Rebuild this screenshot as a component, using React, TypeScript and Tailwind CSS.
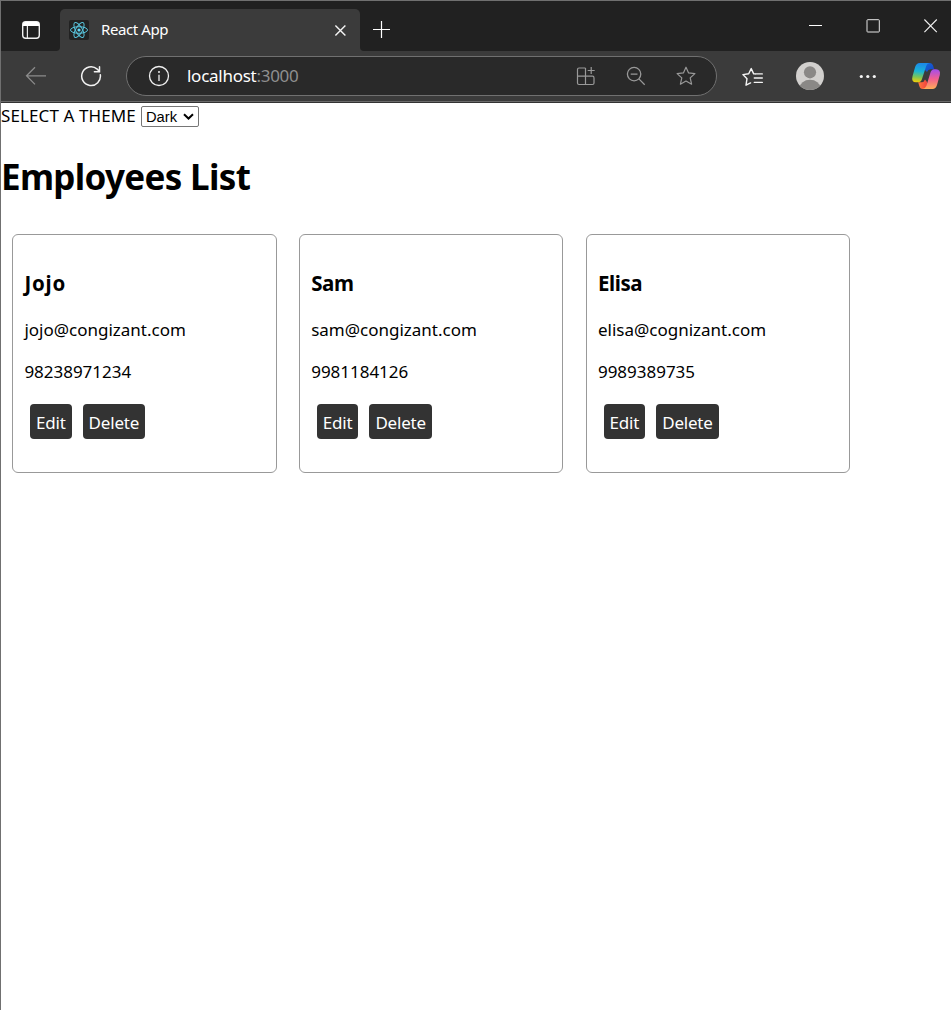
import React from 'react';

type Employee = { name: string; email: string; phone: string; nameClass: string };

const employees: Employee[] = [
  { name: 'Jojo', email: 'jojo@congizant.com', phone: '98238971234', nameClass: 'tracking-[0.8px]' },
  { name: 'Sam', email: 'sam@congizant.com', phone: '9981184126', nameClass: 'tracking-[-0.4px]' },
  { name: 'Elisa', email: 'elisa@cognizant.com', phone: '9989389735', nameClass: 'tracking-[-0.4px]' },
];

const STAR = 'M10 1.2 L12.6 6.9 L18.9 7.6 L14.2 11.9 L15.6 18.2 L10 15.1 L4.4 18.2 L5.8 11.9 L1.1 7.6 L7.4 6.9 Z';

function TabStrip() {
  return (
    <div className="flex h-[50px] items-start bg-[#212121]">
      <svg className="ml-[20px] mt-[19px] h-5 w-5 shrink-0" viewBox="0 0 20 20" fill="none">
        <rect x="1.7" y="1.7" width="16.6" height="16.6" rx="3" stroke="#f2f2f2" strokeWidth="1.4" />
        <path d="M2 3.6 Q2 2 4 2 H16 Q18 2 18 3.6 V6 H2 Z" fill="#fff" />
        <path d="M6.4 6 V18" stroke="#e8e8e8" strokeWidth="1.2" />
      </svg>
      <div className="ml-[15px] flex self-stretch">
        <svg className="mt-[46px] h-1 w-1" viewBox="0 0 4 4"><path d="M4 0 V4 H0 Q4 4 4 0" fill="#3b3b3b" /></svg>
        <div className="mt-[8px] flex h-[42px] w-[300px] items-center rounded-t-[5px] bg-[#3b3b3b]">
          <svg className="ml-[9px] h-5 w-5" viewBox="0 0 20 20" fill="none">
            <rect width="20" height="20" rx="2" fill="#222" />
            <g stroke="#58c4dc" strokeWidth="1">
              <ellipse cx="10" cy="10" rx="8.5" ry="3.3" />
              <ellipse cx="10" cy="10" rx="8.5" ry="3.3" transform="rotate(60 10 10)" />
              <ellipse cx="10" cy="10" rx="8.5" ry="3.3" transform="rotate(120 10 10)" />
            </g>
            <circle cx="10" cy="10" r="1.6" fill="#61dafb" />
          </svg>
          <span className="mb-[2px] ml-[12px] w-[233px] whitespace-nowrap text-[15px] leading-5 tracking-[-0.4px] text-white">React App</span>
          <svg className="h-3 w-3" viewBox="0 0 12 12" fill="none" stroke="#f5f5f5" strokeWidth="1.4"><path d="M1.4 1.5 L11.4 11.5 M11.4 1.5 L1.4 11.5" /></svg>
        </div>
        <svg className="mt-[46px] h-1 w-1" viewBox="0 0 4 4"><path d="M0 0 V4 H4 Q0 4 0 0" fill="#3b3b3b" /></svg>
      </div>
      <svg className="ml-[8px] mt-[19px] h-[19px] w-[19px]" viewBox="0 0 19 19" fill="none" stroke="#fff" strokeWidth="1.2"><path d="M1 9.5 H18 M9.5 1 V18" /></svg>
      <div className="ml-auto mr-[13px] mt-[18px] flex">
        <svg className="h-[14px] w-[14px]" viewBox="0 0 14 14"><path d="M0 6.5 H13" stroke="#fff" /></svg>
        <svg className="ml-[43px] h-[14px] w-[14px]" viewBox="0 0 14 14" fill="none"><rect x="1" y=".7" width="12.3" height="12.3" rx=".7" stroke="#e6e6e6" /></svg>
        <svg className="ml-[44px] h-[14px] w-[14px]" viewBox="0 0 14 14"><path d="M.4 .5 L12.8 13.2 M12.8 .5 L.4 13.2" stroke="#f0f0f0" strokeWidth="1.1" /></svg>
      </div>
    </div>
  );
}

function Copilot() {
  return (
    <svg className="ml-[33px] h-[28px] w-[30px]" viewBox="0 0 30 28">
      <defs>
        <linearGradient id="cpA" x1="0.1" y1="0" x2="0" y2="1">
          <stop offset="0" stopColor="#1c8be8" /><stop offset=".4" stopColor="#19b4d6" /><stop offset=".7" stopColor="#7bc558" /><stop offset="1" stopColor="#ffd000" />
        </linearGradient>
        <linearGradient id="cpB" x1="0" y1="0" x2="0" y2="1">
          <stop offset="0" stopColor="#a24dee" /><stop offset=".5" stopColor="#f3608f" /><stop offset="1" stopColor="#ffae57" />
        </linearGradient>
        <linearGradient id="cpC" x1="0" y1="0" x2="1" y2="1">
          <stop offset="0" stopColor="#1468d8" /><stop offset="1" stopColor="#1641c4" />
        </linearGradient>
        <linearGradient id="cpD" x1="0" y1="0" x2="1" y2="0">
          <stop offset="0" stopColor="#ff7a3c" /><stop offset="1" stopColor="#f0443f" />
        </linearGradient>
      </defs>
      <path d="M14 1 H18.7 Q21.2 1 22.2 4 L23.2 7.2 H19.5 Q17 7.2 16 10 L14 8 Z" fill="url(#cpC)" />
      <path d="M16 27 H11.5 Q9.2 27 8.2 23.7 L7.2 20.3 H10.5 Q13 20.3 14 17.5 L16 20 Z" fill="url(#cpD)" />
      <path d="M8.8 1 H18.7 Q16.2 1.2 15.2 4 L11 17 Q10 20.2 7.2 20.2 H5 Q0 20.2 1.5 14.2 L4.2 4.8 Q5.4 1 8.8 1 Z" fill="url(#cpA)" />
      <path d="M21.5 27 H11.5 Q14.4 26.8 15.4 23.8 L19.4 10.8 Q20.4 7.2 23.2 7.2 H25 Q30 7.4 28.8 13 L26 23 Q24.8 27 21.5 27 Z" fill="url(#cpB)" />
    </svg>
  );
}

function Toolbar() {
  return (
    <div className="flex h-[50px] items-center bg-[#3b3b3b]">
      <svg className="ml-[24px] h-5 w-[22px] shrink-0" viewBox="0 0 22 20" fill="none" stroke="#8c8c8c" strokeWidth="1.25"><path d="M21 9.8 H1.5 M10 1.2 L1.5 9.8 L10 18.4" /></svg>
      <svg className="ml-[33px] h-[22px] w-[22px] shrink-0" viewBox="0 0 22 22" fill="none" stroke="#f2f2f2" strokeWidth="1.5" strokeLinecap="round">
        <path d="M20.3 9.7 A9.35 9.35 0 1 1 17.2 4.1 L19.3 6.4 M19.5 1.8 V6.7 H14.4" />
      </svg>
      <div className="ml-[24px] flex h-[40px] w-[591px] shrink-0 items-center rounded-full border border-[#707070] bg-[#292929]">
        <svg className="ml-[21px] h-[22px] w-[22px] shrink-0" viewBox="0 0 22 22" fill="none" stroke="#f0f0f0" strokeWidth="1.3">
          <circle cx="11" cy="11" r="9.5" /><path d="M11 9.7 V16" /><circle cx="11" cy="7" r=".4" />
        </svg>
        <span className="ml-[17px] w-[389px] whitespace-nowrap text-[17px] leading-6 tracking-[-0.27px] text-white">localhost<span className="text-[#8f8f8f]">:3000</span></span>
        <svg className="h-5 w-5 shrink-0" viewBox="0 0 20 20" fill="none" stroke="#999" strokeWidth="1.2">
          <path d="M9.5 2 H3 Q1.5 2 1.5 3.5 V17 Q1.5 18.5 3 18.5 H16.5 Q18 18.5 18 17 V12 Q18 10.2 16.5 10.2 H1.5 M9.5 2 V18.5 M15.2 1 V8 M11.7 4.5 H18.7" />
        </svg>
        <svg className="ml-[30px] h-5 w-5 shrink-0" viewBox="0 0 20 20" fill="none" stroke="#999" strokeWidth="1.3"><circle cx="8.1" cy="8.1" r="6.7" /><path d="M4.7 8.1 H11.5 M12.9 12.9 L18.7 18.7" /></svg>
        <svg className="ml-[30px] h-5 w-5 shrink-0" viewBox="0 0 20 20" fill="none" stroke="#999" strokeWidth="1.2" strokeLinejoin="round"><path d={STAR} /></svg>
      </div>
      <svg className="ml-[24px] mt-[1px] h-5 w-[23px] shrink-0" viewBox="0 0 23 20" fill="none" stroke="#f4f4f4" strokeWidth="1.4" strokeLinejoin="round" strokeLinecap="round">
        <path d="M14 6.9 H12.7 L10.2 1.6 L7.7 6.7 L1.9 7.6 L6 11.7 L5 18.2 L9.6 15.9" />
        <path d="M14.5 6.9 H21.3 M13.3 11 H21.3 M13.3 15.4 H21.3" />
      </svg>
      <svg className="ml-[32px] h-7 w-7 shrink-0" viewBox="0 0 28 28">
        <defs><clipPath id="avatarClip"><circle cx="14" cy="14" r="14" /></clipPath></defs>
        <circle cx="14" cy="14" r="14" fill="#d2d0ce" />
        <g fill="#8a8886" clipPath="url(#avatarClip)"><circle cx="14" cy="10.3" r="6.1" /><ellipse cx="14" cy="25.8" rx="10.4" ry="8" /></g>
      </svg>
      <svg className="ml-[34px] h-5 w-5 shrink-0" viewBox="0 0 20 20" fill="#f5f5f5"><circle cx="3.3" cy="10.5" r="1.6" /><circle cx="9.8" cy="10.5" r="1.6" /><circle cx="16.3" cy="10.5" r="1.6" /></svg>
      <Copilot />
    </div>
  );
}

function Card({ employee }: { employee: Employee }) {
  return (
    <article className="h-[239px] w-[264.6px] shrink-0 rounded-[6px] border border-[#999] pl-[11.4px] pt-[33px]">
      <h3 className={`h-[30px] whitespace-nowrap text-[20.5px] font-bold leading-[30px] ${employee.nameClass}`}>{employee.name}</h3>
      <p className="mt-[20px] h-6 whitespace-nowrap text-[17px] leading-6">{employee.email}</p>
      <p className="mt-[18px] h-6 whitespace-nowrap text-[17px] leading-6 tracking-[-0.02px]">{employee.phone}</p>
      <div className="ml-[5.6px] mt-[20px] flex gap-[11.1px]">
        <button className="flex h-[35px] w-[41.6px] items-center justify-center rounded-[4px] bg-[#333] pt-[2px] text-[17px] tracking-[-0.2px] text-white">Edit</button>
        <button className="flex h-[35px] w-[62.4px] items-center justify-center rounded-[4px] bg-[#333] pt-[2px] text-[17px] tracking-[-0.2px] text-white">Delete</button>
      </div>
    </article>
  );
}

export default function App() {
  return (
    <div className="flex h-[1010px] w-[951px] flex-col overflow-hidden border-l border-t border-[#707070] bg-white font-['Noto_Sans',sans-serif] text-black">
      <TabStrip />
      <Toolbar />
      <div className="h-[2px] border-t border-[#6b6b6b] bg-[#333]" />
      <main>
        <div className="flex h-[24px] items-start">
          <label htmlFor="theme" className="w-[140px] whitespace-nowrap text-[17px] leading-[26px] tracking-[0.1px]">SELECT A THEME</label>
          <div className="mt-[3px] grid h-[21px] w-[58px] items-center">
            <select id="theme" defaultValue="Dark" className="col-start-1 row-start-1 h-[21px] w-[58px] appearance-none rounded-[2px] border border-[#767676] bg-white pl-[4px] pt-px font-['Liberation_Sans',sans-serif] text-[14.7px] leading-[18px]">
              <option>Dark</option>
              <option>Light</option>
            </select>
            <svg className="pointer-events-none col-start-1 row-start-1 mr-[5px] h-[8px] w-[11px] justify-self-end" viewBox="0 0 11 8" fill="none" stroke="#000" strokeWidth="2"><path d="M1 1.2 L5.5 5.5 L10 1.2" /></svg>
          </div>
        </div>
        <h1 className="mt-[26px] h-[48px] whitespace-nowrap text-[35px] font-bold leading-[48px] tracking-[-0.68px]">Employees List</h1>
        <section className="ml-[11px] mt-[33px] flex gap-[22.2px]">
          {employees.map((e) => <Card key={e.name} employee={e} />)}
        </section>
      </main>
    </div>
  );
}
